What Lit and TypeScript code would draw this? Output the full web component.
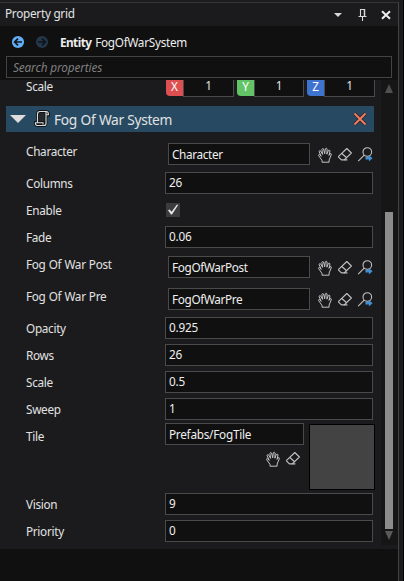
import { LitElement, html, css, svg, nothing } from "lit";
import { customElement, property } from "lit/decorators.js";

type Kind = "number" | "ref" | "check" | "asset";
interface Prop {
  label: string;
  kind: Kind;
  value: string;
}

const PROPS: Prop[] = [
  { label: "Character", kind: "ref", value: "Character" },
  { label: "Columns", kind: "number", value: "26" },
  { label: "Enable", kind: "check", value: "" },
  { label: "Fade", kind: "number", value: "0.06" },
  { label: "Fog Of War Post", kind: "ref", value: "FogOfWarPost" },
  { label: "Fog Of War Pre", kind: "ref", value: "FogOfWarPre" },
  { label: "Opacity", kind: "number", value: "0.925" },
  { label: "Rows", kind: "number", value: "26" },
  { label: "Scale", kind: "number", value: "0.5" },
  { label: "Sweep", kind: "number", value: "1" },
  { label: "Tile", kind: "asset", value: "Prefabs/FogTile" },
  { label: "Vision", kind: "number", value: "9" },
  { label: "Priority", kind: "number", value: "0" },
];

const GLYPHS = {
  hand: svg`<g fill="none" stroke="#c2c2c2" stroke-width="1" stroke-linejoin="round" stroke-linecap="round">
    <path d="M5 14.8V13.4L1.6 8.6Q1.3 7.4 2.6 7.6L4.2 9.4L2.1 4.6Q2.2 3.2 3.5 3.8L5.6 7.4L4.9 2.3Q5.4 .9 6.6 2L7.7 6.8L8.3 1.8Q9.3 .5 10.1 1.9L9.9 7.2L11.4 3.4Q12.7 2.6 13 4L12 8.4L13.1 6.7Q14.6 6.3 14.3 7.8L12.1 13V14.8Z"/></g>`,
  eraser: svg`<g fill="none" stroke="#c2c2c2" stroke-width="1.1" stroke-linejoin="round">
    <path d="M9.8 1.5L14.4 6L7.2 12.9H4.4L1.6 10.1V9.4Z"/><path d="M4.8 6.5L10 11M7 12.9H10.4"/></g>`,
  find: svg`<g fill="none" stroke="#c2c2c2" stroke-width="1.1">
    <circle cx="10.3" cy="5" r="4.3"/><path d="M7.2 8.1L1.2 14.2"/></g>
    <path d="M8.5 10H11.9V8L15.6 11.2L11.9 14.4V12.4H8.5Z" fill="#3f8fd2"/>`,
};

@customElement("tool-icon")
export class ToolIcon extends LitElement {
  @property() name: keyof typeof GLYPHS = "hand";
  static styles = css`
    :host { display: block; width: 16px; height: 16px; }
    svg { display: block; }
  `;
  render() {
    return html`<svg width="16" height="16" viewBox="0 0 16 16">${GLYPHS[this.name]}</svg>`;
  }
}

@customElement("prop-row")
export class PropRow extends LitElement {
  @property({ attribute: false }) prop!: Prop;
  static styles = css`
    :host { display: block; }
    .row { display: flex; height: 27px; line-height: 16px; }
    .row.ref { height: 32px; }
    .row.asset { height: 68px; }
    .label { width: 139px; padding: 5px 0 0 26px; flex: none; white-space: nowrap; letter-spacing: -0.3px; word-spacing: 0.4px; }
    .field { box-sizing: border-box; height: 22px; background: #101010; border: 1px solid #4a4a4b; padding: 1px 3px 0; color: #efefef; white-space: nowrap; letter-spacing: -0.22px; }
    .number .field { width: 208px; margin-top: 2px; }
    .ref .field { width: 142px; margin: 5px 0 0 3px; padding-top: 2px; letter-spacing: -0.35px; }
    .asset .field { width: 139px; padding-top: 2px; letter-spacing: -0.25px; }
    .tools { display: flex; gap: 4px; }
    .ref .tools { margin: 9px 0 0 7px; }
    .asset .tools { margin-top: 6px; padding-right: 3px; justify-content: flex-end; }
    .tick { width: 14px; height: 14px; margin: 6px 0 0 1px; background: #3c3c3e; }
    .tick svg { display: block; }
    .preview { box-sizing: border-box; width: 66px; height: 66px; margin: 1px 0 0 5px; background: #434343; border: 1px solid #000; }
  `;
  private body() {
    const { kind, value } = this.prop;
    const field = html`<div class="field">${value}</div>`;
    switch (kind) {
      case "number":
        return field;
      case "ref":
        return html`${field}
          <div class="tools">
            <tool-icon name="hand"></tool-icon><tool-icon name="eraser"></tool-icon><tool-icon name="find"></tool-icon>
          </div>`;
      case "check":
        return html`<div class="tick"><svg width="14" height="14" viewBox="0 0 14 14"><path d="M2 7.2L3.6 6.6L5.6 8.8L10.8 1.8L12.3 1.8L6 11.4H5Z" fill="#e6e6e6"/></svg></div>`;
      case "asset":
        return html`<div>
            ${field}
            <div class="tools"><tool-icon name="hand"></tool-icon><tool-icon name="eraser"></tool-icon></div>
          </div>
          <div class="preview"></div>`;
      default:
        return nothing;
    }
  }
  render() {
    return html`<div class="row ${this.prop.kind}"><div class="label">${this.prop.label}</div>${this.body()}</div>`;
  }
}

@customElement("app-root")
export class AppRoot extends LitElement {
  static styles = css`
    :host { display: block; width: 404px; height: 581px; overflow: hidden; color: #e2e2e2; font: 11.75px/16px "Noto Sans", "Open Sans", sans-serif; }
    svg { display: block; flex: none; }
    .frame { display: flex; box-sizing: border-box; height: 581px; background: #1c1c1f; border-right: 1px solid #050505; padding: 2px 4px 0 0; }
    .panel { display: flex; flex-direction: column; flex: 1; border-top: 1px solid #343436; border-right: 1px solid #434345; background: #101010; }
    .title { display: flex; height: 23px; background: #1b1b1e; }
    .title span { flex: 1; padding: 2px 0 0 5px; letter-spacing: -0.27px; }
    .crumbs { display: flex; height: 30px; padding-left: 11px; }
    .crumbs svg { margin-top: 9px; margin-right: 10px; }
    .crumbs p { margin: 8px 0 0 1px; letter-spacing: -0.27px; color: #ededed; white-space: nowrap; }
    .crumbs b { letter-spacing: -0.55px; margin-right: 1px; }
    .search { box-sizing: border-box; width: 386px; height: 22px; margin: 0 0 2px 6px; padding: 2px 6px 0; border: 1px solid #434344; color: #7f7f7f; font-style: italic; letter-spacing: -0.12px; }
    .view { display: flex; height: 465px; }
    .list { width: 381px; background: #1b1b1d; }
    .bar { box-sizing: border-box; flex: 1; display: flex; flex-direction: column; align-items: flex-start; padding-left: 4px; background: #161616; }
    .bar svg { margin-top: 4px; }
    .thumb { width: 8px; height: 317px; margin-top: 119px; background: #8c8c8c; }
    .bar .down { margin-top: 2px; }
    .end { height: 4px; background: #1b1b1d; }
    .vector { display: flex; height: 17px; }
    .vector .label { width: 140px; padding-left: 26px; margin-top: -2px; letter-spacing: -0.3px; }
    .badge { width: 17px; height: 16px; border-radius: 0 0 0 4px; text-align: center; line-height: 13px; color: #fff; }
    .num { box-sizing: border-box; width: 51px; height: 17px; border: 1px solid #4a4a4b; border-top: 0; background: #101010; text-align: center; line-height: 11px; margin-right: 3px; }
    .x { background: #dd4f50; }
    .y { background: #62c367; }
    .z { background: #3f73d0; }
    .y + .num { width: 50px; }
    .head { display: flex; width: 368px; height: 26px; margin: 9px 0 6px 6px; background: #274a62; }
    .head .caret { margin: 9px 0 0 4px; }
    .head .script { margin: 4px 0 0 8px; }
    .head h2 { flex: 1; margin: 0 0 0 4px; font-size: 13.75px; font-weight: 400; line-height: 28px; letter-spacing: -0.35px; word-spacing: 0.4px; }
    .head .remove { margin: 6px 7px 0 0; }
  `;

  private axis(name: string) {
    return html`<div class="badge ${name.toLowerCase()}">${name}</div><div class="num">1</div>`;
  }

  render() {
    return html`
      <div class="frame">
        <div class="panel">
          <div class="title">
            <span>Property grid</span>
            <svg width="66" height="23" viewBox="0 0 66 23">
              <path d="M2 10H10L6 14Z" fill="#d8d8d8" />
              <path d="M28.5 13V6.5H32.5V13M26.5 13.5H34.5M30.5 14V18" fill="none" stroke="#d8d8d8" stroke-width="1.1" />
              <path d="M32.5 6V13" stroke="#d8d8d8" stroke-width="1.4" />
              <path d="M50 8.2L58 15.8M58 8.2L50 15.8" stroke="#eeeeee" stroke-width="2" />
            </svg>
          </div>
          <div class="crumbs">
            <svg width="14" height="14" viewBox="0 0 14 14"><circle cx="7" cy="7" r="6.1" fill="#63adf5" /><path d="M11 7H4M7 3.6L3.6 7L7 10.4" fill="none" stroke="#101820" stroke-width="1.7" /></svg>
            <svg width="14" height="14" viewBox="0 0 14 14"><circle cx="7" cy="7" r="6.1" fill="#24374a" /><path d="M3 7H10M7 3.6L10.4 7L7 10.4" fill="none" stroke="#10151b" stroke-width="1.7" /></svg>
            <p><b>Entity</b> FogOfWarSystem</p>
          </div>
          <div class="search">Search properties</div>
          <div class="view">
            <div class="list">
              <div class="vector"><div class="label">Scale</div>${["X", "Y", "Z"].map((n) => this.axis(n))}</div>
              <div class="head">
                <svg class="caret" width="16" height="8" viewBox="0 0 16 8"><path d="M0 0H16L8 8Z" fill="#e0dcdc" /></svg>
                <svg class="script" width="16" height="18" viewBox="0 0 16 18">
                  <path d="M3.5 12.5V4Q3.5 1.5 6 1.5H12.5Q15 2 14.7 5H12V13.5Q12 15.5 10 15.5H3Q1 15 1.5 12.5H9.3V14" fill="#26292c" stroke="#111417" stroke-width="2.8" />
                  <path d="M3.5 12.5V4Q3.5 1.5 6 1.5H12.5Q14.7 2 14.4 4.8H12M12 2V13.5Q12 15.5 10 15.5H3Q1 15 1.5 12.7H9V14.5" fill="none" stroke="#dddddd" stroke-width="1.1" />
                </svg>
                <h2>Fog Of War System</h2>
                <svg class="remove" width="14" height="14" viewBox="0 0 14 14"><path d="M1.5 1.5L12.5 12.5M12.5 1.5L1.5 12.5" stroke="#2b2424" stroke-width="3.6" /><path d="M1.5 1.5L12.5 12.5M12.5 1.5L1.5 12.5" stroke="#f17b61" stroke-width="2" /></svg>
              </div>
              ${PROPS.map((p) => html`<prop-row .prop=${p}></prop-row>`)}
            </div>
            <div class="bar">
              <svg width="8" height="9" viewBox="0 0 8 9"><path d="M0 9L4 0L8 9Z" fill="#505050" /></svg>
              <div class="thumb"></div>
              <svg class="down" width="8" height="9" viewBox="0 0 8 9"><path d="M0 0H8L4 9Z" fill="#5a5a5a" /></svg>
            </div>
          </div>
          <div class="end"></div>
        </div>
      </div>
    `;
  }
}
